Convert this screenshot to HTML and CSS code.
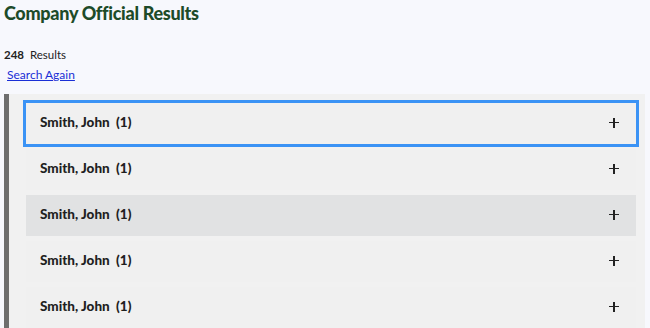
FILE: index.html
```html
<!DOCTYPE html>
<html lang="en">
<head>
<meta charset="utf-8">
<title>Company Official Results</title>
<link rel="stylesheet" href="styles.css">
</head>
<body>
<main class="page">
  <h1 class="title">Company Official Results</h1>
  <p class="count"><b>248</b> Results</p>
  <a class="again" href="#">Search Again</a>
  <section class="list">
    <div class="item focused"><span class="name">Smith, John&nbsp; (1)</span><span class="plus"></span></div>
    <div class="item"><span class="name">Smith, John&nbsp; (1)</span><span class="plus"></span></div>
    <div class="item hover"><span class="name">Smith, John&nbsp; (1)</span><span class="plus"></span></div>
    <div class="item"><span class="name">Smith, John&nbsp; (1)</span><span class="plus"></span></div>
    <div class="item"><span class="name">Smith, John&nbsp; (1)</span><span class="plus"></span></div>
  </section>
</main>
</body>
</html>
```
FILE: styles.css
```css
html, body {
  margin: 0;
  padding: 0;
  background: #f7f8fd;
  font-family: "Lato", "Noto Sans", sans-serif;
  color: #1b1b1b;
}
.page {
  padding: 0 0 0 4px;
}
.title {
  margin: 0;
  padding-top: 1px;
  font-size: 18px;
  line-height: 24px;
  font-weight: 900;
  letter-spacing: -0.3px;
  color: #1d4b29;
}
.count {
  margin: 22px 0 0 0;
  font-size: 11.5px;
  line-height: 16px;
  color: #222;
}
.count b {
  margin-right: 3px;
}
.again {
  display: inline-block;
  margin: 3px 0 0 3px;
  font-size: 12px;
  line-height: 16px;
  color: #1a2fd6;
  text-decoration: underline;
}
.list {
  margin: 11px 5px 0 0;
  border-left: 5px solid #6e6e6e;
  background: #f1f1f1;
  padding: 9px 9px 0 17px;
  display: flex;
  flex-direction: column;
  gap: 5px;
}
.item {
  height: 41px;
  flex: none;
  box-sizing: border-box;
  display: flex;
  align-items: center;
  justify-content: space-between;
  padding: 0 17px 3px 14px;
  background: #f0f0f0;
}
.item.focused {
  outline: 3px solid #3b93f5;
}
.item.hover {
  background: #e1e2e3;
}
.name {
  font-size: 13.5px;
  font-weight: 900;
  color: #1f1f1f;
}
.plus {
  position: relative;
  width: 10px;
  height: 10px;
  margin-top: 1px;
}
.plus::before, .plus::after {
  content: "";
  position: absolute;
  background: #222;
}
.plus::before {
  left: 0;
  top: 4.2px;
  width: 10px;
  height: 1.6px;
}
.plus::after {
  left: 4.2px;
  top: 0;
  width: 1.6px;
  height: 10px;
}
```
